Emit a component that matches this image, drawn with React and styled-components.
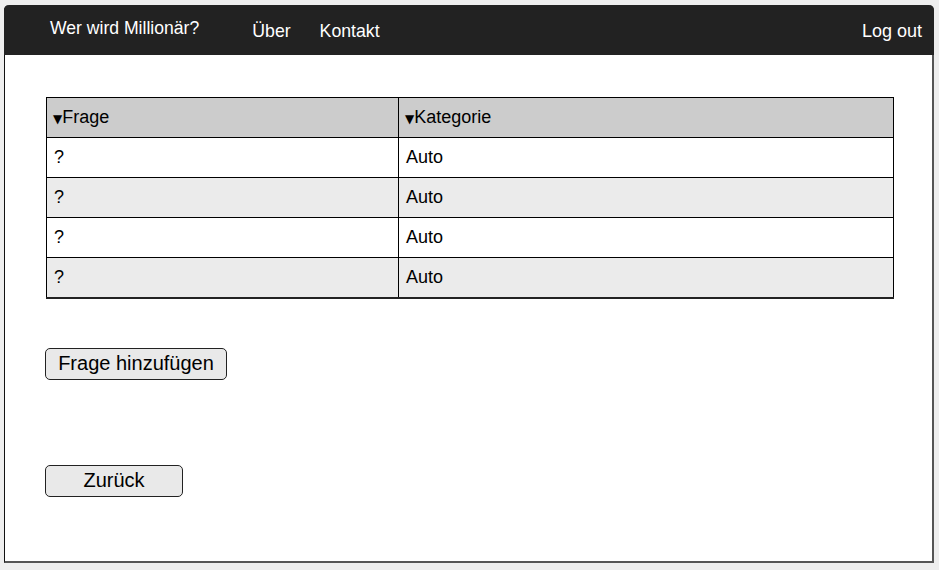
import styled, { createGlobalStyle } from 'styled-components';

const GlobalStyle = createGlobalStyle`
  body {
    margin: 0;
    background: #eeeeee;
    font-family: "Liberation Sans", Arial, sans-serif;
  }
`;

const rows = [
  { frage: '?', kategorie: 'Auto' },
  { frage: '?', kategorie: 'Auto' },
  { frage: '?', kategorie: 'Auto' },
  { frage: '?', kategorie: 'Auto' },
];

const App = () => {
  return (
    <>
      <GlobalStyle />
      <Frame>
        <Nav>
          <Brand>Wer wird Millionär?</Brand>
          <NavLinks>
            <li>Über</li>
            <li>Kontakt</li>
          </NavLinks>
          <Logout>Log out</Logout>
        </Nav>
        <Content>
          <Table>
            <thead>
              <tr>
                <Th $width={352}>
                  <Arrow>▼</Arrow>Frage
                </Th>
                <Th>
                  <Arrow>▼</Arrow>Kategorie
                </Th>
              </tr>
            </thead>
            <tbody>
              {rows.map((row, i) => (
                <Row key={i} $odd={i % 2 === 1}>
                  <Td>{row.frage}</Td>
                  <Td>{row.kategorie}</Td>
                </Row>
              ))}
            </tbody>
          </Table>
          <Button $width={182}>Frage hinzufügen</Button>
          <Button $width={138} $top={85}>Zurück</Button>
        </Content>
      </Frame>
    </>
  );
};

const Frame = styled.div`
  display: flex;
  flex-direction: column;
  box-sizing: border-box;
  margin: 5px 0 0 4px;
  width: 930px;
  height: 558px;
  background: #fff;
  border-left: 1px solid #111;
  border-right: 2px solid #555;
  border-bottom: 2px solid #555;
  border-radius: 5px 5px 0 0;
`;

const Nav = styled.nav`
  display: flex;
  align-items: center;
  height: 50px;
  margin-left: -1px;
  margin-right: -2px;
  padding: 0 12px 0 46px;
  background: #222;
  color: #fff;
  border-radius: 5px 5px 0 0;
`;

const Brand = styled.div`
  font-size: 17.6px;
  margin-top: -4px;
`;

const NavLinks = styled.ul`
  display: flex;
  gap: 29px;
  margin: 2px 0 0 53px;
  padding: 0;
  list-style: none;
  font-size: 17.7px;
`;

const Logout = styled.div`
  margin-left: auto;
  margin-top: 2px;
  font-size: 18px;
`;

const Content = styled.main`
  display: flex;
  flex-direction: column;
  align-items: flex-start;
  padding: 42px 0 0 41px;
`;

const Table = styled.table`
  width: 848px;
  border-collapse: collapse;
  font-size: 18px;
  color: #000;
`;

const Arrow = styled.span`
  font-family: "DejaVu Sans", sans-serif;
  font-size: 12px;
`;

const Th = styled.th`
  width: ${(p) => (p.$width ? `${p.$width}px` : 'auto')};
  height: 40px;
  padding: 0 6px;
  box-sizing: border-box;
  background: #cccccc;
  border: 1px solid #000;
  text-align: left;
  font-weight: normal;
`;

const Row = styled.tr`
  background: ${(p) => (p.$odd ? '#ebebeb' : '#fff')};
  &:last-child td {
    border-bottom: 2px solid #222;
  }
`;

const Td = styled.td`
  height: 40px;
  padding: 0 7px;
  box-sizing: border-box;
  border: 1px solid #000;
`;

const Button = styled.button`
  width: ${(p) => p.$width}px;
  height: 32px;
  margin-top: ${(p) => p.$top || 49}px;
  margin-left: -1px;
  padding: 0;
  background: #e9e9e9;
  border: 1px solid #222;
  border-radius: 5px;
  font-family: "Liberation Sans", Arial, sans-serif;
  font-size: 20px;
  color: #000;
`;

export default App;
